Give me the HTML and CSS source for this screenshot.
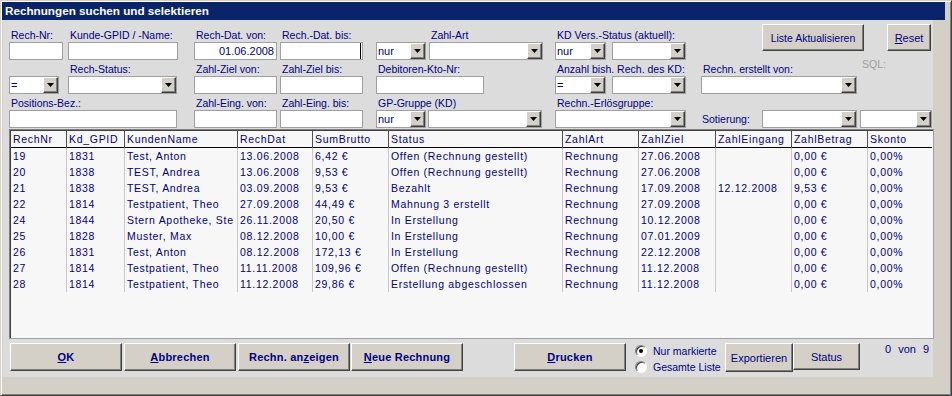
FILE: index.html
```html
<!DOCTYPE html>
<html lang="de">
<head>
    <meta charset="UTF-8">
    <title>Rechnungen suchen und selektieren</title>
    <link rel="stylesheet" href="styles.css">
</head>
<body>

<div class="window">
    <div class="titlebar">Rechnungen suchen und selektieren</div>

    <div class="panel">
        <!-- Filter -->
        <div class="row">
            <div class="field f-nr"><label>Rech-Nr:</label><div class="inp"></div></div>
            <div class="field f-kunde"><label>Kunde-GPID / -Name:</label><div class="inp"></div></div>
            <div class="field f-dat"><label>Rech-Dat. von:</label><div class="inp right">01.06.2008</div></div>
            <div class="field f-bis"><label>Rech.-Dat. bis:</label><div class="inp caret"></div></div>
            <div class="field f-zahlart">
                <label class="shift">Zahl-Art</label>
                <div class="pair">
                    <div class="combo w50"><span>nur</span><i class="drop"></i></div>
                    <div class="combo w114"><span></span><i class="drop"></i></div>
                </div>
            </div>
            <div class="field f-vers">
                <label>KD Vers.-Status (aktuell):</label>
                <div class="pair wide">
                    <div class="combo w51"><span>nur</span><i class="drop"></i></div>
                    <div class="combo w74"><span></span><i class="drop"></i></div>
                </div>
            </div>
            <button class="btn btn-refresh">Liste Aktualisieren</button>
            <button class="btn btn-reset"><u>R</u>eset</button>
        </div>

        <div class="row">
            <div class="field f-op"><label></label><div class="combo w50"><span>=</span><i class="drop"></i></div></div>
            <div class="field f-status"><label>Rech-Status:</label><div class="combo w109"><span></span><i class="drop"></i></div></div>
            <div class="field f-dat2"><label>Zahl-Ziel von:</label><div class="inp"></div></div>
            <div class="field f-bis"><label>Zahl-Ziel bis:</label><div class="inp"></div></div>
            <div class="field f-debitor"><label>Debitoren-Kto-Nr:</label><div class="inp"></div></div>
            <div class="field f-anzahl">
                <label>Anzahl bish. Rech. des KD:</label>
                <div class="pair wide">
                    <div class="combo w51"><span>=</span><i class="drop"></i></div>
                    <div class="combo w74"><span></span><i class="drop"></i></div>
                </div>
            </div>
            <div class="field f-ersteller"><label>Rechn. erstellt von:</label><div class="combo w156"><span></span><i class="drop"></i></div></div>
            <div class="field f-sql"><label class="muted">SQL:</label></div>
        </div>

        <div class="row">
            <div class="field f-pos"><label>Positions-Bez.:</label><div class="inp"></div></div>
            <div class="field f-dat2"><label>Zahl-Eing. von:</label><div class="inp"></div></div>
            <div class="field f-bis"><label>Zahl-Eing. bis:</label><div class="inp"></div></div>
            <div class="field f-gruppe">
                <label>GP-Gruppe (KD)</label>
                <div class="pair tight">
                    <div class="combo w50"><span>nur</span><i class="drop"></i></div>
                    <div class="combo w114"><span></span><i class="drop"></i></div>
                </div>
            </div>
            <div class="field f-erloes"><label>Rechn.-Erlösgruppe:</label><div class="combo w131"><span></span><i class="drop"></i></div></div>
            <div class="field f-sort">
                <label></label>
                <div class="sort-line">
                    <span class="sort-label">Sotierung:</span>
                    <div class="combo w95"><span></span><i class="drop"></i></div>
                    <div class="combo w72"><span></span><i class="drop"></i></div>
                </div>
            </div>
        </div>

        <!-- Liste -->
        <div class="list-box">
            <table class="list">
                <colgroup>
                    <col class="c55"><col class="c58"><col class="c113"><col class="c75"><col class="c76">
                    <col class="c174"><col class="c76"><col class="c77"><col class="c76"><col class="c76"><col>
                </colgroup>
                <thead>
                    <tr>
                        <th>RechNr</th><th>Kd_GPID</th><th>KundenName</th><th>RechDat</th><th>SumBrutto</th>
                        <th>Status</th><th>ZahlArt</th><th>ZahlZiel</th><th>ZahlEingang</th><th>ZahlBetrag</th><th>Skonto</th>
                    </tr>
                </thead>
                <tbody>
                    <tr><td>19</td><td>1831</td><td>Test, Anton</td><td>13.06.2008</td><td>6,42 €</td><td>Offen (Rechnung gestellt)</td><td>Rechnung</td><td>27.06.2008</td><td></td><td>0,00 €</td><td>0,00%</td></tr>
                    <tr><td>20</td><td>1838</td><td>TEST, Andrea</td><td>13.06.2008</td><td>9,53 €</td><td>Offen (Rechnung gestellt)</td><td>Rechnung</td><td>27.06.2008</td><td></td><td>0,00 €</td><td>0,00%</td></tr>
                    <tr><td>21</td><td>1838</td><td>TEST, Andrea</td><td>03.09.2008</td><td>9,53 €</td><td>Bezahlt</td><td>Rechnung</td><td>17.09.2008</td><td>12.12.2008</td><td>9,53 €</td><td>0,00%</td></tr>
                    <tr><td>22</td><td>1814</td><td>Testpatient, Theo</td><td>27.09.2008</td><td>44,49 €</td><td>Mahnung 3 erstellt</td><td>Rechnung</td><td>27.09.2008</td><td></td><td>0,00 €</td><td>0,00%</td></tr>
                    <tr><td>24</td><td>1844</td><td>Stern Apotheke, Ste</td><td>26.11.2008</td><td>20,50 €</td><td>In Erstellung</td><td>Rechnung</td><td>10.12.2008</td><td></td><td>0,00 €</td><td>0,00%</td></tr>
                    <tr><td>25</td><td>1828</td><td>Muster, Max</td><td>08.12.2008</td><td>10,00 €</td><td>In Erstellung</td><td>Rechnung</td><td>07.01.2009</td><td></td><td>0,00 €</td><td>0,00%</td></tr>
                    <tr><td>26</td><td>1831</td><td>Test, Anton</td><td>08.12.2008</td><td>172,13 €</td><td>In Erstellung</td><td>Rechnung</td><td>22.12.2008</td><td></td><td>0,00 €</td><td>0,00%</td></tr>
                    <tr><td>27</td><td>1814</td><td>Testpatient, Theo</td><td>11.11.2008</td><td>109,96 €</td><td>Offen (Rechnung gestellt)</td><td>Rechnung</td><td>11.12.2008</td><td></td><td>0,00 €</td><td>0,00%</td></tr>
                    <tr><td>28</td><td>1814</td><td>Testpatient, Theo</td><td>11.12.2008</td><td>29,86 €</td><td>Erstellung abgeschlossen</td><td>Rechnung</td><td>11.12.2008</td><td></td><td>0,00 €</td><td>0,00%</td></tr>
                </tbody>
            </table>
        </div>

        <!-- Aktionen -->
        <div class="actions">
            <button class="btn btn-main"><u>O</u>K</button>
            <button class="btn btn-main gap2"><u>A</u>bbrechen</button>
            <button class="btn btn-main gap2">Rechn. an<u>z</u>eigen</button>
            <button class="btn btn-main gap1 w113"><u>N</u>eue Rechnung</button>
            <button class="btn btn-main btn-print w113"><u>D</u>rucken</button>
            <div class="choice">
                <div class="opt"><span class="radio on"></span>Nur markierte</div>
                <div class="opt"><span class="radio"></span>Gesamte Liste</div>
            </div>
            <button class="btn btn-export">Exportieren</button>
            <button class="btn btn-state">Status</button>
            <div class="count">0 von 9</div>
        </div>
    </div>
</div>

</body>
</html>
```

FILE: styles.css
```css
* {
    box-sizing: border-box;
}
body {
    margin: 0;
    font-family: "Liberation Sans", Arial, sans-serif;
    font-size: 11px;
    color: #000080;
}
.window {
    width: 952px;
    height: 396px;
    background: #d4d0c8;
    border: 1px solid;
    border-color: #d4d0c8 #404040 #404040 #d4d0c8;
    box-shadow: inset 1px 1px #fff, inset -1px -1px #808080;
    padding: 1px;
}
.titlebar {
    width: 943px;
    height: 18px;
    background: #0a246a;
    color: #fff;
    font-weight: bold;
    font-size: 11.7px;
    line-height: 18px;
    padding-left: 3px;
}
.panel {
    width: 930px;
    height: 357px;
    margin-left: 1px;
    background: #dcdcdc;
    padding: 8px 0 0 6px;
}

/* filter rows */
.row {
    display: flex;
    align-items: flex-start;
    height: 32px;
}
.row + .row {
    margin-top: 2px;
}
label {
    display: block;
    height: 14px;
    line-height: 14px;
    padding-left: 2px;
    font-size: 10.5px;
    white-space: nowrap;
}
label.shift {
    padding-left: 55px;
}
label.muted {
    color: #a0a0a0;
    margin-top: -5px;
}
.inp,
.combo {
    height: 18px;
    border: 1px solid #a0a0a0;
    background: #fff;
    line-height: 16px;
    padding: 0 2px;
    white-space: nowrap;
}
.inp.right {
    text-align: right;
}
.inp.caret {
    box-shadow: inset -1px 0 #fff, inset -2px 0 #000;
}
.combo {
    display: flex;
    padding: 0 0 0 1px;
}
.combo span {
    flex: 1;
}
.drop {
    width: 15px;
    height: 16px;
    background: #d4d0c8;
    border: 1px solid;
    border-color: #fff #404040 #404040 #fff;
    box-shadow: inset -1px -1px #808080;
    display: flex;
    align-items: center;
    justify-content: center;
}
.drop::after {
    content: "";
    width: 7px;
    height: 4px;
    background: #000;
    clip-path: polygon(0 0, 100% 0, 50% 100%);
}
.pair {
    display: flex;
    gap: 3px;
}
.pair.wide {
    gap: 6px;
}
.pair.tight {
    gap: 2px;
}

.w50 { width: 50px; }
.w51 { width: 51px; }
.w72 { width: 72px; }
.w74 { width: 74px; }
.w95 { width: 95px; }
.w109 { width: 109px; }
.w113 { width: 113px; }
.w114 { width: 114px; }
.w131 { width: 131px; }
.w156 { width: 156px; }

.f-nr { width: 54px; }
.f-kunde { width: 110px; margin-left: 5px; }
.f-dat { width: 83px; margin-left: 16px; }
.f-dat2 { width: 83px; margin-left: 17px; }
.f-bis { width: 83px; margin-left: 3px; }
.f-zahlart { width: 167px; margin-left: 13px; }
.f-vers { width: 131px; margin-left: 12px; }
.f-op { width: 50px; }
.f-status { width: 109px; margin-left: 9px; }
.f-debitor { width: 108px; margin-left: 13px; }
.f-anzahl { width: 131px; margin-left: 71px; }
.f-ersteller { width: 156px; margin-left: 15px; }
.f-sql { margin-left: 3px; }
.f-pos { width: 168px; }
.f-gruppe { width: 166px; margin-left: 13px; }
.f-erloes { width: 131px; margin-left: 13px; }
.f-sort { margin-left: 15px; }

.sort-line {
    display: flex;
    align-items: center;
    gap: 3px;
}
.sort-label {
    width: 58px;
    padding-left: 1px;
    font-size: 10.5px;
}

/* buttons */
.btn {
    height: 27px;
    padding: 0;
    background: #d4d0c8;
    border: 1px solid;
    border-color: #fff #404040 #404040 #fff;
    box-shadow: inset -1px -1px #808080;
    font-family: inherit;
    font-size: 11px;
    color: #000080;
    white-space: nowrap;
}
.btn-refresh {
    width: 102px;
    margin: -4px 0 0 76px;
    font-size: 10.5px;
}
.btn-reset {
    width: 44px;
    margin: -4px 0 0 23px;
}

/* list */
.list-box {
    width: 925px;
    height: 210px;
    margin-top: 1px;
    background: #f7f7f7;
    border: 1px solid;
    border-color: #808080 #a0a0a0 #a0a0a0 #808080;
    box-shadow: inset 1px 1px #404040;
    padding: 1px 0 0 1px;
    overflow: hidden;
}
.list {
    width: 921px;
    border-collapse: separate;
    border-spacing: 0;
    table-layout: fixed;
    font-size: 10.5px;
    letter-spacing: 0.7px;
}
.c55 { width: 55px; }
.c58 { width: 58px; }
.c75 { width: 75px; }
.c76 { width: 76px; }
.c77 { width: 77px; }
.c113 { width: 113px; }
.c174 { width: 174px; }
.list th,
.list td {
    height: 16px;
    line-height: 16px;
    padding: 0 0 0 3px;
    text-align: left;
    font-weight: normal;
    white-space: nowrap;
    overflow: hidden;
}
.list th {
    height: 17px;
    padding-bottom: 1px;
    box-shadow: inset 0 -1px #000;
}
.list th + th {
    box-shadow: inset 1px 0 #505050, inset 0 -1px #000;
}
.list td + td {
    box-shadow: inset 1px 0 #c8c8c8;
}
.list th:first-child,
.list td:first-child {
    padding-left: 2px;
}

/* actions */
.actions {
    display: flex;
    align-items: flex-start;
    margin-top: 4px;
    padding-left: 1px;
}
.btn-main {
    width: 112px;
    height: 28px;
    font-weight: bold;
    letter-spacing: 0.2px;
}
.gap1 { margin-left: 1px; }
.gap2 { margin-left: 2px; }
.btn-print {
    margin-left: 51px;
}
.choice {
    width: 90px;
    margin-left: 9px;
}
.opt {
    display: flex;
    align-items: center;
    gap: 6px;
    height: 16px;
    font-size: 10.5px;
    white-space: nowrap;
}
.radio {
    width: 12px;
    height: 12px;
    border-radius: 50%;
    background: #fff;
    border: 1px solid;
    border-color: #808080 #fff #fff #808080;
    box-shadow: inset 1px 1px #404040;
    display: flex;
    align-items: center;
    justify-content: center;
}
.radio.on::after {
    content: "";
    width: 4px;
    height: 4px;
    border-radius: 50%;
    background: #000;
}
.btn-export {
    width: 68px;
    height: 29px;
}
.btn-state {
    width: 67px;
}
.count {
    margin: -2px 0 0 25px;
    line-height: 16px;
    word-spacing: 4px;
}
```
